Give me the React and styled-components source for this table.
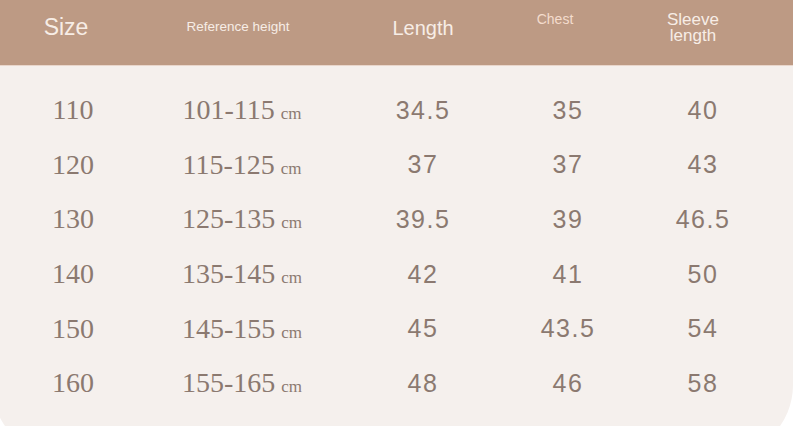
import React from "react";
import styled, { createGlobalStyle } from "styled-components";

const rows = [
  { size: "110", height: "101-115", length: "34.5", chest: "35", sleeve: "40" },
  { size: "120", height: "115-125", length: "37", chest: "37", sleeve: "43" },
  { size: "130", height: "125-135", length: "39.5", chest: "39", sleeve: "46.5" },
  { size: "140", height: "135-145", length: "42", chest: "41", sleeve: "50" },
  { size: "150", height: "145-155", length: "45", chest: "43.5", sleeve: "54" },
  { size: "160", height: "155-165", length: "48", chest: "46", sleeve: "58" },
];

const GlobalStyle = createGlobalStyle`
  html, body {
    margin: 0;
    padding: 0;
    background: #ffffff;
    overflow: hidden;
  }
  body {
    font-family: "Liberation Sans", Arial, sans-serif;
  }
`;

const Page = styled.div`
  width: 800px;
  height: 426px;
  overflow: hidden;
  background: #ffffff;
`;

// card bleeds a little off the left edge, rounded bottom corners fall below the fold
const Card = styled.div`
  width: 801px;
  height: 456px;
  margin-left: -8px;
  background: #f5f0ed;
  border-bottom-left-radius: 71px;
  border-bottom-right-radius: 71px;
  overflow: hidden;
`;

const Header = styled.div`
  display: grid;
  grid-template-columns: 148px 196px 174px 90px 186px;
  height: 66px;
  box-sizing: border-box;
  padding-bottom: 10px;
  background: #bd9a84;
  border-bottom: 1px solid #e9d6cb;
  align-items: center;
  color: #f7ede6;
`;

const HeadCell = styled.div`
  text-align: center;
  font-size: ${(p) => p.$size}px;
  line-height: ${(p) => p.$lh || "1.1"};
  color: ${(p) => p.$color || "inherit"};
  align-self: ${(p) => p.$align || "center"};
  padding-top: ${(p) => p.$top || 0}px;
  white-space: nowrap;
`;

const Body = styled.div`
  padding-top: 17px;
`;

const Row = styled.div`
  display: grid;
  grid-template-columns: 162px 176px 186px 104px 166px;
  height: 54.6px;
  align-items: center;
  color: #8b7970;
`;

const SerifCell = styled.div`
  text-align: center;
  font-family: "Liberation Serif", "Times New Roman", serif;
  font-size: 28px;
  white-space: nowrap;
`;

const Unit = styled.span`
  font-size: 17px;
  margin-left: 6px;
`;

const SansCell = styled.div`
  text-align: center;
  font-family: "Liberation Sans", Arial, sans-serif;
  font-size: 25px;
  letter-spacing: 1.5px;
`;

export default function App() {
  return (
    <Page>
      <GlobalStyle />
      <Card>
        <Header>
          <HeadCell $size={23}>Size</HeadCell>
          <HeadCell $size={13.5}>Reference height</HeadCell>
          <HeadCell $size={20}>Length</HeadCell>
          <HeadCell $size={14} $align="start" $top={12} $color="#f4dccd">
            Chest
          </HeadCell>
          <HeadCell $size={17} $lh="16px" $align="start" $top={12}>
            Sleeve
            <br />
            length
          </HeadCell>
        </Header>
        <Body>
          {rows.map((r) => (
            <Row key={r.size}>
              <SerifCell>{r.size}</SerifCell>
              <SerifCell>
                {r.height}
                <Unit>cm</Unit>
              </SerifCell>
              <SansCell>{r.length}</SansCell>
              <SansCell>{r.chest}</SansCell>
              <SansCell>{r.sleeve}</SansCell>
            </Row>
          ))}
        </Body>
      </Card>
    </Page>
  );
}
